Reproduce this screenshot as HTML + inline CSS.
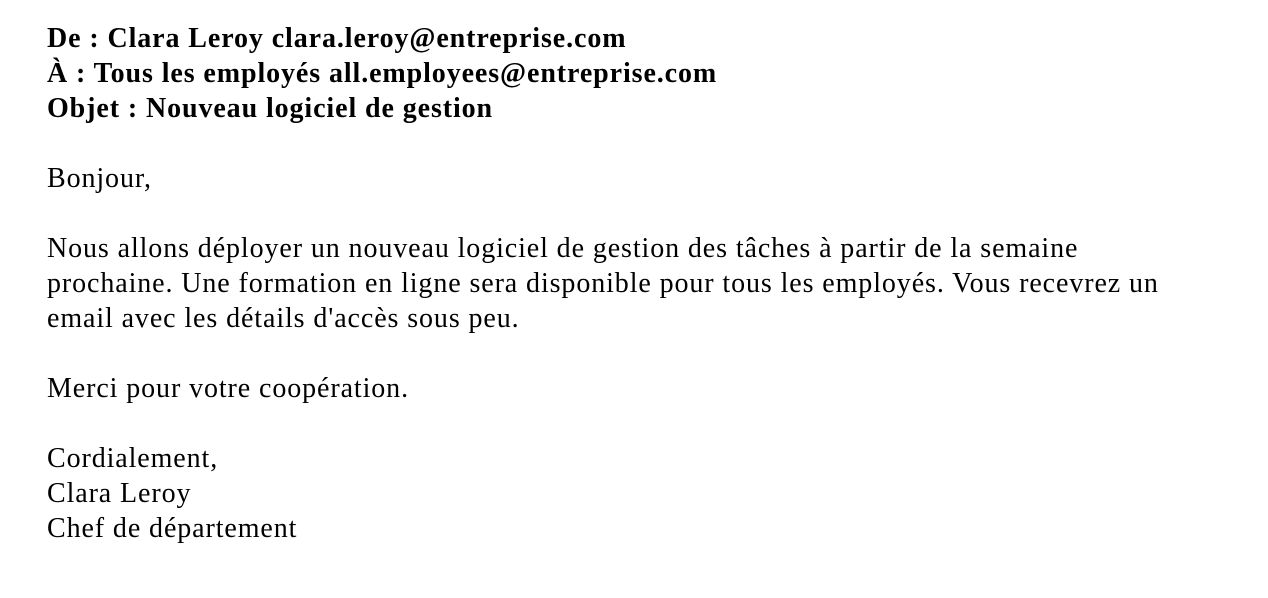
<!DOCTYPE html>
<html><head><meta charset="utf-8"><style>
html,body{margin:0;background:#fff;width:1268px;height:598px;overflow:hidden}
.c{position:absolute;left:47px;top:21px;font-family:"Liberation Serif",serif;font-size:28px;line-height:35px;letter-spacing:0.9px;color:#000;white-space:nowrap}
b{font-weight:bold}
</style></head><body><div class="c">
<b>De : Clara Leroy clara.leroy@entreprise.com</b><br>
<b>À : Tous les employés all.employees@entreprise.com</b><br>
<b>Objet : Nouveau logiciel de gestion</b><br>
<br>
Bonjour,<br>
<br>
Nous allons déployer un nouveau logiciel de gestion des tâches à partir de la semaine<br>
prochaine. Une formation en ligne sera disponible pour tous les employés. Vous recevrez un<br>
email avec les détails d'accès sous peu.<br>
<br>
Merci pour votre coopération.<br>
<br>
Cordialement,<br>
Clara Leroy<br>
Chef de département
</div></body></html>
